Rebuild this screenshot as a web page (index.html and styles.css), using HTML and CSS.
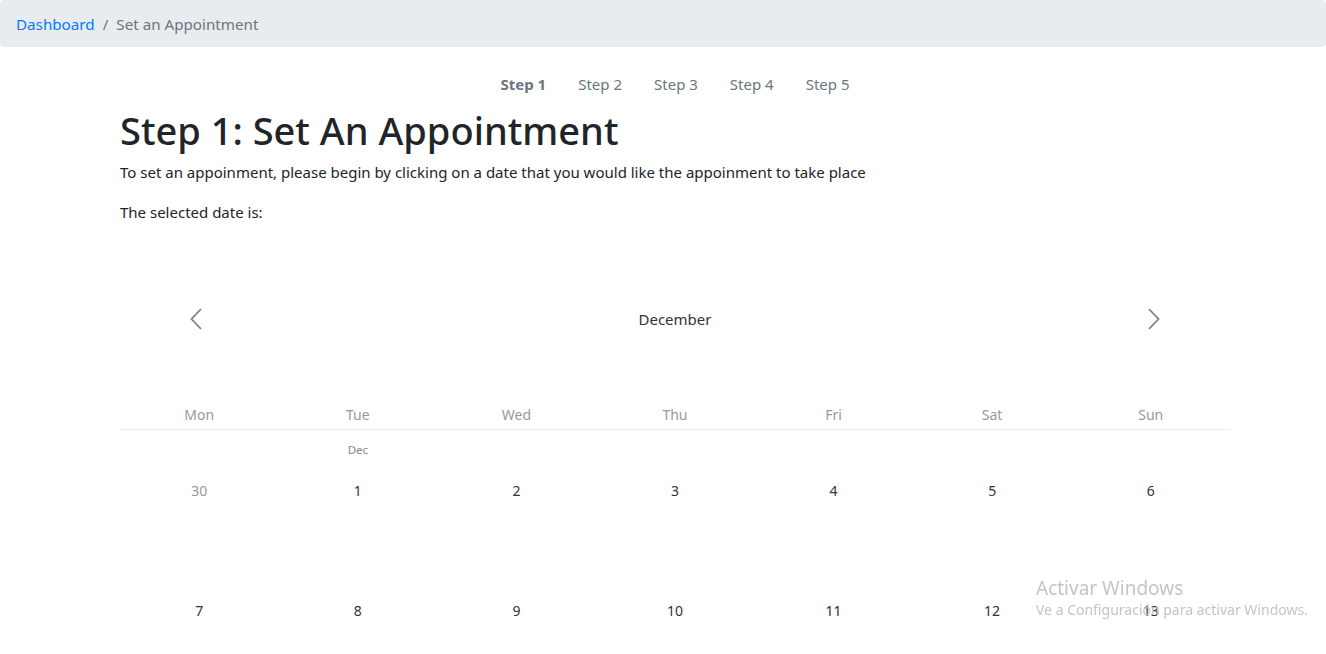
FILE: index.html
```html
<!DOCTYPE html>
<html lang="en">
<head>
<meta charset="utf-8">
<title>Set an Appointment</title>
<link rel="stylesheet" href="styles.css">
</head>
<body>
<nav class="breadcrumb">
  <a class="crumb-link" href="#">Dashboard</a>
  <span class="crumb-sep">/</span>
  <span class="crumb-current">Set an Appointment</span>
</nav>
<main class="container">
  <ul class="steps">
    <li class="step active">Step 1</li>
    <li class="step">Step 2</li>
    <li class="step">Step 3</li>
    <li class="step">Step 4</li>
    <li class="step">Step 5</li>
  </ul>
  <h1 class="title">Step 1: Set An Appointment</h1>
  <p class="lead">To set an appoinment, please begin by clicking on a date that you would like the appoinment to take place</p>
  <p class="selected">The selected date is:</p>

  <section class="calendar">
    <div class="cal-nav">
      <button class="cal-arrow" aria-label="Previous">
        <svg width="12" height="22" viewBox="0 0 12 22"><path d="M11 1 L1.5 11 L11 21" fill="none" stroke="#808080" stroke-width="1.8"/></svg>
      </button>
      <div class="cal-month">December</div>
      <button class="cal-arrow" aria-label="Next">
        <svg width="12" height="22" viewBox="0 0 12 22"><path d="M1 1 L10.5 11 L1 21" fill="none" stroke="#808080" stroke-width="1.8"/></svg>
      </button>
    </div>
    <div class="cal-head">
      <div>Mon</div><div>Tue</div><div>Wed</div><div>Thu</div><div>Fri</div><div>Sat</div><div>Sun</div>
    </div>
    <div class="cal-grid">
      <div class="day other"><span class="mon"></span><span class="num">30</span></div>
      <div class="day"><span class="mon">Dec</span><span class="num">1</span></div>
      <div class="day"><span class="mon"></span><span class="num">2</span></div>
      <div class="day"><span class="mon"></span><span class="num">3</span></div>
      <div class="day"><span class="mon"></span><span class="num">4</span></div>
      <div class="day"><span class="mon"></span><span class="num">5</span></div>
      <div class="day"><span class="mon"></span><span class="num">6</span></div>
      <div class="day"><span class="mon"></span><span class="num">7</span></div>
      <div class="day"><span class="mon"></span><span class="num">8</span></div>
      <div class="day"><span class="mon"></span><span class="num">9</span></div>
      <div class="day"><span class="mon"></span><span class="num">10</span></div>
      <div class="day"><span class="mon"></span><span class="num">11</span></div>
      <div class="day"><span class="mon"></span><span class="num">12</span></div>
      <div class="day"><span class="mon"></span><span class="num">13</span></div>
    </div>
  </section>
</main>
<div class="watermark">
  <div class="wm-title">Activar Windows</div>
  <div class="wm-sub">Ve a Configuración para activar Windows.</div>
</div>
</body>
</html>
```

FILE: styles.css
```css
* { box-sizing: border-box; }
html, body { margin: 0; padding: 0; }
body {
  font-family: "Noto Sans", "Open Sans", sans-serif;
  font-size: 15px;
  color: #212529;
  background: #fff;
  overflow: hidden;
}
.breadcrumb {
  display: flex;
  align-items: center;
  height: 47px;
  padding: 1px 16px 0 16px;
  background: #e9ecef;
  border-radius: 4px;
  font-size: 15.2px;
}
.crumb-link { color: #007bff; text-decoration: none; }
.crumb-sep { color: #6c757d; padding: 0 8px; }
.crumb-current { color: #6c757d; }

.container {
  width: 1110px;
  margin: 0 auto 0 120px;
}
.steps {
  list-style: none;
  display: flex;
  justify-content: center;
  gap: 32px;
  margin: 0;
  padding: 26px 0 0 0;
  color: #6c757d;
  height: 59px;
  line-height: 22px;
}
.step.active { font-weight: 700; }

.title {
  font-size: 38px;
  font-weight: 500;
  line-height: 48px;
  margin: 0 0 6px 0;
}
.lead { margin: 0 0 16px 0; line-height: 24px; }
.selected { margin: 0; line-height: 24px; }

.calendar { margin-top: 77px; }
.cal-nav {
  display: flex;
  align-items: center;
  justify-content: space-between;
  height: 36px;
  padding: 0 70px;
}
.cal-arrow {
  background: none;
  border: 0;
  padding: 0;
  width: 12px;
  height: 22px;
  cursor: pointer;
}
.cal-month { color: #333; font-size: 15px; }
.cal-head {
  display: grid;
  grid-template-columns: repeat(7, 1fr);
  margin-top: 65px;
  height: 28px;
  border-bottom: 1px solid #eaeaea;
  color: #999;
  font-size: 14px;
  text-align: center;
  line-height: 26px;
}
.cal-grid {
  display: grid;
  grid-template-columns: repeat(7, 1fr);
  grid-auto-rows: 120px;
  text-align: center;
}
.day { display: flex; flex-direction: column; align-items: center; }
.mon { height: 22px; margin-top: 9px; font-size: 11.5px; color: #888; line-height: 22px; }
.num { margin-top: 19px; font-size: 14px; color: #333; line-height: 22px; }
.day.other .num { color: #999; }

.watermark {
  position: fixed;
  left: 1036px;
  top: 576px;
  color: #c4c4c4;
  pointer-events: none;
}
.wm-title { font-size: 19px; line-height: 24px; }
.wm-sub { font-size: 14px; line-height: 20px; }
```
